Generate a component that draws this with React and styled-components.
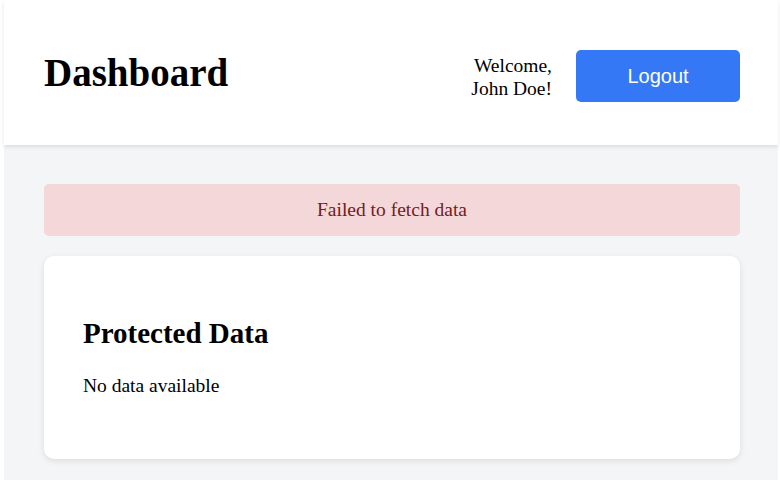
import React from 'react';
import styled, { createGlobalStyle } from 'styled-components';

const GlobalStyle = createGlobalStyle`
	html, body {
		margin: 0;
		background: #ffffff;
	}
	body {
		font-family: "Liberation Serif", "Times New Roman", serif;
		color: #000;
	}
`;

const Page = styled.div`
	margin-left: 4px;
	margin-right: 2px;
	min-height: 100vh;
	background: #f4f5f7;
`;

const Header = styled.header`
	display: flex;
	align-items: center;
	justify-content: space-between;
	height: 145px;
	box-sizing: border-box;
	padding: 7px 38px 0 40px;
	background: #ffffff;
	box-shadow: 0 2px 4px rgba(0, 0, 0, 0.1);
`;

const Title = styled.h1`
	margin: 0 0 8px;
	font-size: 39px;
	font-weight: bold;
`;

const UserArea = styled.div`
	display: flex;
	align-items: center;
	gap: 24px;
`;

const Welcome = styled.span`
	font-size: 19.5px;
	line-height: 23px;
	text-align: right;
	margin-top: 2px;
`;

const LogoutButton = styled.button`
	width: 164px;
	height: 52px;
	border: none;
	border-radius: 5px;
	background: #3478f6;
	color: #ffffff;
	font-family: "Liberation Sans", Arial, sans-serif;
	font-size: 20px;
	cursor: pointer;
`;

const Main = styled.main`
	padding: 39px 38px 0 40px;
	display: flex;
	flex-direction: column;
	gap: 20px;
`;

const ErrorBanner = styled.div`
	height: 52px;
	display: flex;
	align-items: center;
	justify-content: center;
	border-radius: 5px;
	background: #f3d7d9;
	color: #721c24;
	font-size: 19.5px;
`;

const Card = styled.section`
	padding: 40px 40px 40px 39px;
	border-radius: 10px;
	background: #ffffff;
	box-shadow: 0 2px 6px rgba(0, 0, 0, 0.1);
`;

const CardTitle = styled.h2`
	margin: 21px 0 25px;
	font-size: 29px;
	font-weight: bold;
`;

const CardText = styled.p`
	margin: 0 0 22px;
	font-size: 19.5px;
`;

const App = () => {
	return (
		<>
			<GlobalStyle />
			<Page>
				<Header>
					<Title>Dashboard</Title>
					<UserArea>
						<Welcome>
							Welcome,
							<br />
							John Doe!
						</Welcome>
						<LogoutButton>Logout</LogoutButton>
					</UserArea>
				</Header>
				<Main>
					<ErrorBanner>Failed to fetch data</ErrorBanner>
					<Card>
						<CardTitle>Protected Data</CardTitle>
						<CardText>No data available</CardText>
					</Card>
				</Main>
			</Page>
		</>
	);
};

export default App;
